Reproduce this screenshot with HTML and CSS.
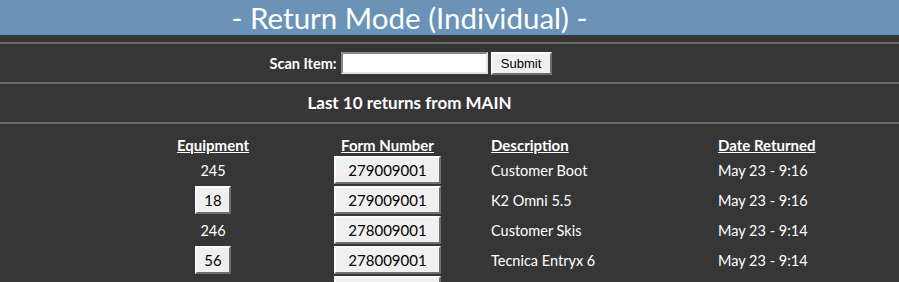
FILE: index.html
```html
<!DOCTYPE html>
<html lang="en">
<head>
  <meta charset="UTF-8" />
  <title>Return Mode</title>
  <link rel="stylesheet" href="styles.css">
</head>
<body>
  <div class="header">- Return Mode (Individual) -</div>

  <hr>
  <form class="scan">
    <label for="scan">Scan Item:</label>
    <input type="text" id="scan" class="scan-input">
    <button type="button" class="submit">Submit</button>
  </form>
  <hr>
  <div class="subtitle">Last 10 returns from MAIN</div>
  <hr>

  <div class="returns">
    <div class="th c1">Equipment</div>
    <div class="th c2">Form Number</div>
    <div class="th c3">Description</div>
    <div class="th c4">Date Returned</div>

    <div class="c1">245</div>
    <div class="c2"><button class="btn form">279009001</button></div>
    <div class="c3">Customer Boot</div>
    <div class="c4">May 23 - 9:16</div>

    <div class="c1"><button class="btn equip">18</button></div>
    <div class="c2"><button class="btn form">279009001</button></div>
    <div class="c3">K2 Omni 5.5</div>
    <div class="c4">May 23 - 9:16</div>

    <div class="c1">246</div>
    <div class="c2"><button class="btn form">278009001</button></div>
    <div class="c3">Customer Skis</div>
    <div class="c4">May 23 - 9:14</div>

    <div class="c1"><button class="btn equip">56</button></div>
    <div class="c2"><button class="btn form">278009001</button></div>
    <div class="c3">Tecnica Entryx 6</div>
    <div class="c4">May 23 - 9:14</div>

    <div class="c1"></div>
    <div class="c2"><button class="btn form"></button></div>
    <div class="c3"></div>
    <div class="c4"></div>
  </div>
</body>
</html>
```

FILE: styles.css
```css
body {
  margin: 0;
  background: #363636;
  color: #fff;
  font-family: Lato, "Open Sans", sans-serif;
  overflow: hidden;
}
.header {
  height: 35px;
  line-height: 35px;
  background: #6b93b8;
  font-size: 29.5px;
  text-align: center;
  padding-right: 80px;
  margin-bottom: 7px;
}
hr {
  margin: 0;
  height: 0;
  border: 0;
  border-top: 2px solid #6c6c6c;
}
.scan {
  height: 38px;
  display: flex;
  align-items: center;
  justify-content: center;
  padding-right: 78px;
  margin: 0;
}
.scan label {
  font-weight: bold;
  font-size: 14.5px;
  margin-right: 4px;
}
.scan-input {
  width: 143px;
  height: 18px;
  padding: 0;
  border: 2px solid;
  border-color: #8a8a8a #e3e3e3 #e3e3e3 #8a8a8a;
  background: #fff;
  margin: 0 3px 0 0;
}
.submit {
  width: 61px;
  height: 23px;
  padding: 0;
  font-family: "Liberation Sans", Arial, sans-serif;
  font-size: 13px;
  color: #000;
  background: #f0f0f0;
  border: 2px solid;
  border-color: #fafafa #6e6e6e #6e6e6e #fafafa;
}
.subtitle {
  height: 38px;
  line-height: 38px;
  text-align: center;
  padding-right: 80px;
  font-weight: bold;
  font-size: 17px;
}
.returns {
  display: grid;
  grid-template-columns: 100px 178px 277px auto;
  grid-template-rows: 31px;
  grid-auto-rows: 30px;
  margin-left: 163px;
  font-size: 14.5px;
}
.returns > div {
  display: flex;
  align-items: center;
}
.returns > .th {
  font-weight: bold;
  font-size: 15px;
  text-decoration: underline;
  padding-top: 10px;
}
.c1 {
  justify-content: center;
}
.c2 {
  justify-content: center;
  width: 107px;
  justify-self: end;
}
.c3 {
  padding-left: 50px;
}
.btn {
  height: 28px;
  padding: 0;
  font-family: Lato, "Open Sans", sans-serif;
  font-size: 15px;
  color: #000;
  background: #f0f0f0;
  border: 2px solid;
  border-color: #fafafa #6e6e6e #6e6e6e #fafafa;
}
.btn.form {
  width: 107px;
}
.btn.equip {
  width: 36px;
}
```
